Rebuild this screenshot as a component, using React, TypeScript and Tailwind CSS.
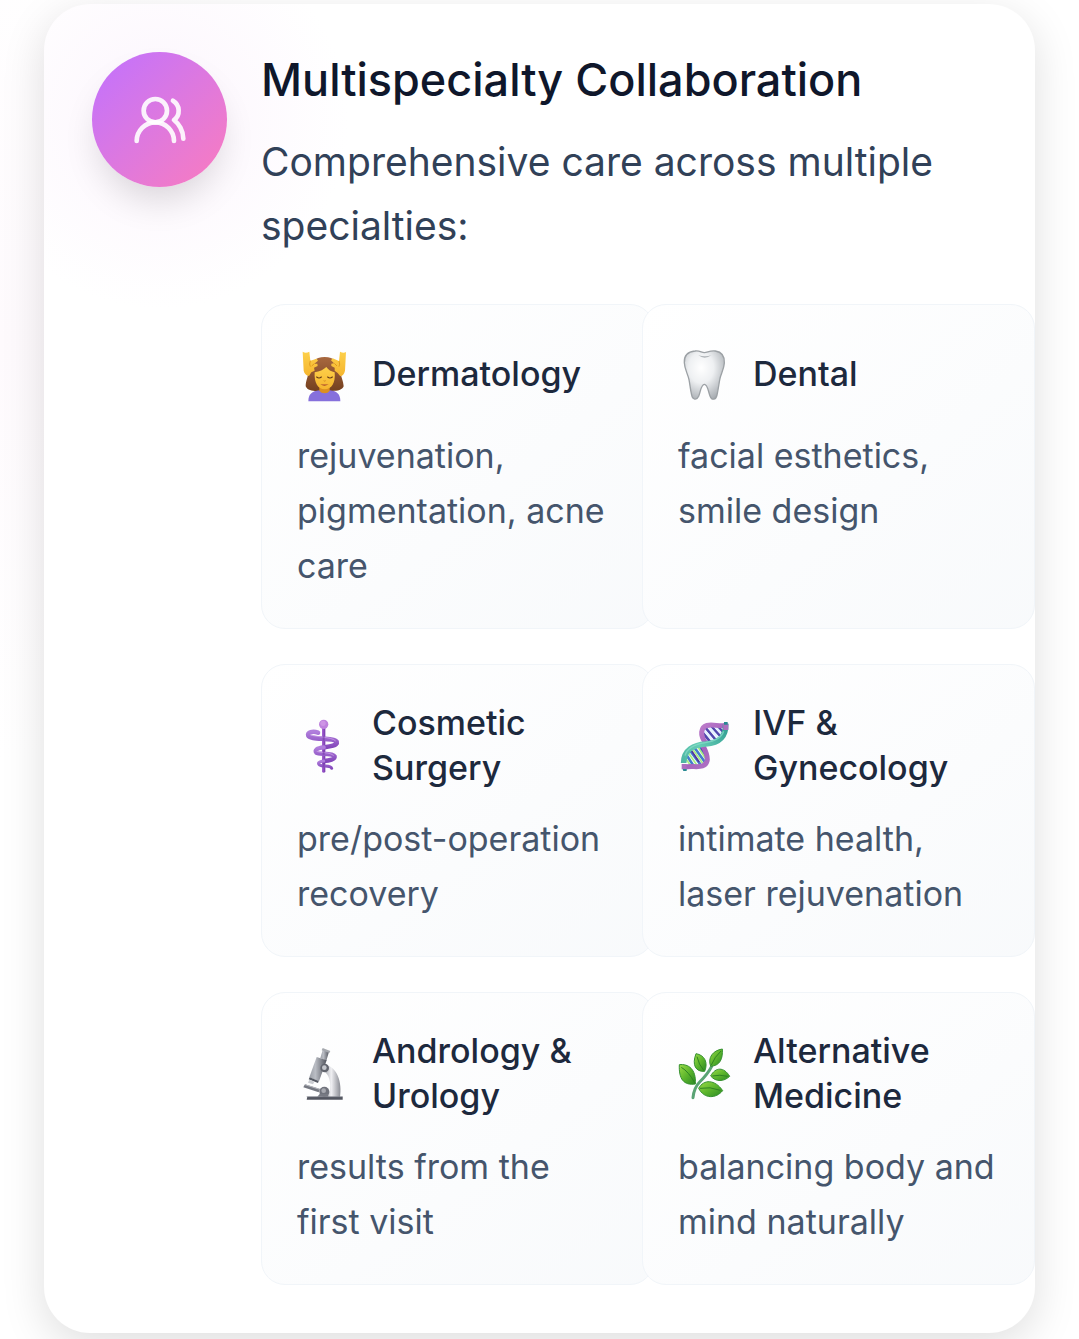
import type { ReactNode } from 'react';
import { UsersRound } from 'lucide-react';

function Art({ label, viewBox, children }: { label: string; viewBox: string; children: ReactNode }) {
  return (
    <svg role="img" aria-label={label} viewBox={viewBox} className="size-[54px] shrink-0 overflow-visible">
      {children}
    </svg>
  );
}

function Massage() {
  return (
    <Art label="Face massage" viewBox="21 20 162 162">
      <defs>
        <linearGradient id="skin" x1="0" y1="0" x2="0" y2="1">
          <stop offset="0" stopColor="#fdd04a" />
          <stop offset="1" stopColor="#f5b52e" />
        </linearGradient>
        <linearGradient id="hair" x1="0" y1="0" x2="0" y2="1">
          <stop offset="0" stopColor="#a8683f" />
          <stop offset="1" stopColor="#74401f" />
        </linearGradient>
      </defs>
      <path d="M104 50C74 50 60 68 56 92C54 111 47 122 47 138C52 150 66 152 80 152H126C143 152 157 149 161 138C160 122 153 111 151 92C147 66 133 50 104 50Z" fill="url(#hair)" />
      <path d="M55 183C55 162 66 152 88 150H120C141 152 151 162 151 183Z" fill="#8670dc" />
      <path d="M88 138H119V151C113 161 95 161 88 151Z" fill="#dc9020" />
      <path d="M74 96C88 94 101 88 109 80C114 88 124 94 134 96C137 128 125 147 104 147C84 147 72 128 74 96Z" fill="url(#skin)" />
      <path d="M80 110Q87 116 94 110M113 110Q120 116 127 110" fill="none" stroke="#633816" strokeWidth="3.5" strokeLinecap="round" />
      <path d="M101 121Q104 124 107 121" fill="none" stroke="#d18b22" strokeWidth="3" />
      <path d="M91 131Q103 141 116 131Q103 134 91 131Z" fill="#a7432c" />
      <path d="M38 34Q47 40 58 34L61 61L80 55L84 61L73 70L82 70L83 77L72 82L74 91L64 96L57 107Q44 104 41 91Z" fill="url(#skin)" />
      <path d="M168 35Q161 40 150 34L147 62L128 54L123 60L132 69L124 70L124 77L134 82L134 91L143 98L151 108Q162 105 165 91Z" fill="url(#skin)" />
      <path d="M61 61Q57 72 61 79M73 70L65 77M147 62Q151 72 147 79M133 69L141 77" fill="none" stroke="#d99018" strokeWidth="2.5" />
    </Art>
  );
}

function Tooth() {
  return (
    <Art label="Tooth" viewBox="21 20 162 162">
      <defs>
        <radialGradient id="enamel" cx=".42" cy=".35" r=".7">
          <stop offset="0" stopColor="#ffffff" />
          <stop offset=".45" stopColor="#eef0f2" />
          <stop offset="1" stopColor="#a8adb2" />
        </radialGradient>
      </defs>
      <path d="M72 32C87 30 91 37 100 37C110 37 115 30 133 32C153 35 161 49 160 68C159 88 149 100 146 119C143 136 141 151 138 164C135 179 122 181 117 167C111 151 110 132 100 132C90 132 89 153 83 168C77 181 64 178 62 164C58 148 57 133 54 118C50 99 41 88 40 67C39 47 50 34 72 32Z" fill="url(#enamel)" stroke="#9ca1a5" strokeWidth="4" />
      <path d="M82 45Q101 59 121 45Q102 51 82 45Z" fill="#8d9398" opacity=".65" />
    </Art>
  );
}

function Staff() {
  return (
    <Art label="Medical staff" viewBox="21 22 162 162">
      <defs>
        <linearGradient id="rod">
          <stop offset="0" stopColor="#a868d5" />
          <stop offset="1" stopColor="#7434ab" />
        </linearGradient>
        <linearGradient id="snake" x1="0" y1="0" x2="0" y2="1">
          <stop offset="0" stopColor="#b07edc" />
          <stop offset="1" stopColor="#8448bb" />
        </linearGradient>
      </defs>
      <path d="M96 43H106V184Q101 188 96 184Z" fill="url(#rod)" />
      <circle cx="101" cy="41" r="14" fill="#bf82dd" />
      <circle cx="99" cy="38" r="8" fill="#d6a0e9" opacity=".65" />
      <g fill="none" stroke="url(#snake)" strokeLinecap="round" strokeLinejoin="round">
        <path d="M84 66C68 60 52 65 55 75C60 88 132 80 140 93C144 105 116 108 101 110" strokeWidth="14" />
        <path d="M101 110C80 112 73 119 79 126C87 132 127 126 134 137C136 146 118 150 101 151" strokeWidth="13" />
        <path d="M101 151C86 153 82 158 89 163C98 169 122 163 125 173" strokeWidth="9" />
      </g>
      <path d="M60 72C72 79 126 78 137 91M80 122C94 127 120 124 131 135" fill="none" stroke="#cfa3ea" strokeWidth="3" opacity=".7" />
      <path d="M101 76V90M101 119V132M101 157V168" stroke="#6d31a4" strokeWidth="6" opacity=".5" />
    </Art>
  );
}

function Dna() {
  return (
    <Art label="DNA" viewBox="21 22 162 162">
      <defs>
        <linearGradient id="violet" gradientUnits="userSpaceOnUse" x1="40" y1="40" x2="165" y2="180">
          <stop offset="0" stopColor="#c98ad2" />
          <stop offset=".5" stopColor="#a663bd" />
          <stop offset="1" stopColor="#b27cc8" />
        </linearGradient>
        <linearGradient id="teal" gradientUnits="userSpaceOnUse" x1="35" y1="150" x2="168" y2="45">
          <stop offset="0" stopColor="#4fb7a4" />
          <stop offset=".4" stopColor="#66cdb5" />
          <stop offset="1" stopColor="#2f9d92" />
        </linearGradient>
      </defs>
      <path d="M92 62L119 95M103 51L137 91M121 47L151 80M139 46L159 68" stroke="#5148ae" strokeWidth="8" />
      <path d="M97 55L129 93M113 48L146 86M131 46L155 73" stroke="#e4f2ff" strokeWidth="7" />
      <path d="M43 128L68 166M53 114L88 161M69 109L101 153M86 109L108 141" stroke="#437ccc" strokeWidth="8" />
      <path d="M37 134L60 166M47 119L78 164M61 110L95 158M79 106L106 147" stroke="#a8ed80" strokeWidth="5" />
      <path d="M57 113L84 154M91 113L108 135" stroke="#55329b" strokeWidth="5" />
      <path d="M164 44C140 50 96 29 92 64C91 76 97 88 104 97" fill="none" stroke="url(#violet)" strokeWidth="15" />
      <path d="M40 171C60 160 104 182 109 147C109 132 103 119 96 106" fill="none" stroke="url(#violet)" strokeWidth="15" />
      <path d="M164 40C165 84 139 97 104 100C70 102 38 117 38 157" fill="none" stroke="url(#teal)" strokeWidth="17" />
      <path d="M156 38H172V58H157ZM32 160H47V176H32Z" fill="#ac70bf" />
      <path d="M159 34H170V42H159ZM35 175H47V181H37Z" fill="#278a92" />
      <path d="M42 135C48 113 73 101 103 96C131 92 151 83 158 62" fill="none" stroke="#91e0cc" strokeWidth="4" opacity=".65" />
    </Art>
  );
}

function Microscope() {
  return (
    <Art label="Microscope" viewBox="21 30 162 162">
      <defs>
        <linearGradient id="arm">
          <stop offset="0" stopColor="#9da0a7" />
          <stop offset=".45" stopColor="#f0f0f3" />
          <stop offset="1" stopColor="#8a8c94" />
        </linearGradient>
        <linearGradient id="tube">
          <stop offset="0" stopColor="#9b9fa7" />
          <stop offset=".35" stopColor="#babdc4" />
          <stop offset="1" stopColor="#52555e" />
        </linearGradient>
      </defs>
      <path d="M105 86C142 92 157 139 150 184H105L119 166C124 141 118 116 101 105Z" fill="url(#arm)" />
      <path d="M52 182H158V191H50Z" fill="#535660" />
      <path d="M50 182H158" stroke="#8b8e97" strokeWidth="2" />
      <path d="M45 145L90 159L86 169L40 154Z" fill="#767982" />
      <path d="M45 146L89 160" stroke="#b8bac1" strokeWidth="3" />
      <circle cx="103" cy="167" r="15" fill="#70737c" />
      <circle cx="101" cy="164" r="7" fill="#a7a9b0" />
      <path d="M82 182L89 174H115V182Z" fill="#777a83" />
      <path d="M98 42L117 47L109 74L91 66Z" fill="url(#tube)" />
      <path d="M98 36L121 45L118 51L95 43Z" fill="#a5a8ae" />
      <path d="M80 63L110 73L87 136L58 124Z" fill="url(#tube)" />
      <path d="M59 124L86 135L84 141L56 130Z" fill="#555963" />
      <path d="M58 131L73 137L69 145L54 140Z" fill="#cbcdd2" />
      <circle cx="104" cy="96" r="13" fill="#62656e" />
      <circle cx="103" cy="95" r="7" fill="#c4c6cc" />
    </Art>
  );
}

const leaves = [
  'M25 86C52 83 76 99 73 144C38 149 23 129 25 86Z',
  'M75 53C101 57 112 80 101 106C74 108 62 87 75 53Z',
  'M154 39C156 67 148 89 119 91C109 65 126 43 154 39Z',
  'M176 121C159 137 135 139 119 120C133 93 159 92 176 121Z',
  'M155 164C135 188 100 190 83 157C98 129 132 130 155 164Z',
];

function Herb() {
  return (
    <Art label="Herb" viewBox="21 30 162 162">
      <defs>
        <linearGradient id="leaf" x1="0" y1="0" x2="1" y2="1">
          <stop offset="0" stopColor="#9bdb47" />
          <stop offset=".5" stopColor="#5cb52c" />
          <stop offset="1" stopColor="#2b8a24" />
        </linearGradient>
      </defs>
      <path d="M66 185C68 164 73 151 86 138C101 123 112 111 122 91" fill="none" stroke="#5aa374" strokeWidth="9" strokeLinecap="round" />
      {leaves.map((d) => (
        <path key={d} d={d} fill="url(#leaf)" stroke="#35912f" strokeWidth="3" />
      ))}
      <path d="M31 94Q53 107 71 140M78 62Q83 86 99 104M150 45Q131 62 121 87M170 121Q146 115 124 120M148 163Q117 151 87 157" fill="none" stroke="#2f8222" strokeWidth="3" />
    </Art>
  );
}

const specialties = [
  { name: 'Dermatology', text: 'rejuvenation, pigmentation, acne care', art: <Massage /> },
  { name: 'Dental', text: 'facial esthetics, smile design', art: <Tooth /> },
  { name: 'Cosmetic Surgery', text: 'pre/post-operation recovery', art: <Staff /> },
  { name: 'IVF & Gynecology', text: 'intimate health, laser rejuvenation', art: <Dna /> },
  { name: 'Andrology & Urology', text: 'results from the first visit', art: <Microscope /> },
  { name: 'Alternative Medicine', text: 'balancing body and mind naturally', art: <Herb /> },
];

export default function App() {
  return (
    <main className="overflow-hidden bg-[radial-gradient(circle_at_0_340px,#fefafd,#ffffff_420px)] px-11 pt-1 pb-2 font-['Inter',sans-serif]">
      <section className="flex items-start gap-[34px] rounded-[46px] bg-white bg-[radial-gradient(circle_at_115px_115px,#fcf5fd,#ffffff_190px)] pt-12 pb-12 pl-12 shadow-[0_12px_44px_rgba(0,0,0,0.13)]">
        <div className="flex size-[135px] shrink-0 items-center justify-center rounded-full bg-linear-to-br from-[#c070ff] to-[#fb7bbd] text-white/90 shadow-[0_20px_36px_-8px_rgba(0,0,0,0.15)]">
          <UsersRound size={56} strokeWidth={2} aria-hidden="true" />
        </div>
        <div className="min-w-0 flex-1">
          <h2 className="text-[45px] leading-14 font-medium text-slate-900">Multispecialty Collaboration</h2>
          <p className="mt-[22px] pr-12 text-[39px] leading-16 text-slate-700">Comprehensive care across multiple specialties:</p>
          <ul className="mt-[46px] grid grid-cols-[381fr_393fr] gap-y-[35px]">
            {specialties.map((item) => (
              <li key={item.name} className="rounded-3xl border border-slate-100 bg-linear-to-br from-white to-slate-50 p-[35px] odd:-mr-3">
                <div className="flex min-h-[67px] items-center gap-[21px]">
                  {item.art}
                  <h3 className="text-[34px] leading-[45px] font-medium text-slate-800">{item.name}</h3>
                </div>
                <p className="mt-[21px] text-[34px] leading-[55px] text-slate-600">{item.text}</p>
              </li>
            ))}
          </ul>
        </div>
      </section>
    </main>
  );
}
